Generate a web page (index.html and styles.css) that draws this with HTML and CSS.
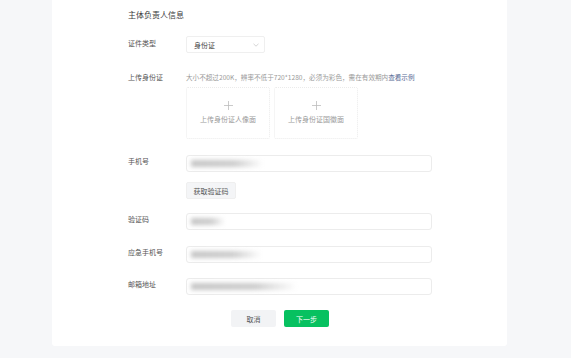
FILE: index.html
```html
<!DOCTYPE html>
<html lang="zh-CN">
<head>
    <meta charset="UTF-8">
    <meta name="viewport" content="width=device-width, initial-scale=1.0">
    <title>主体负责人信息</title>
    <link rel="stylesheet" href="styles.css">
</head>
<body>
    <div class="card">
        <h2 class="title">主体负责人信息</h2>

        <div class="row row-type">
            <label class="label">证件类型</label>
            <div class="field">
                <div class="select">
                    <span>身份证</span>
                    <svg class="chevron" width="6" height="4" viewBox="0 0 6 4"><path d="M0.5 0.8 L3 3.2 L5.5 0.8" fill="none" stroke="#c4c4c4" stroke-width="0.7"/></svg>
                </div>
            </div>
        </div>

        <div class="row row-upload">
            <label class="label">上传身份证</label>
            <div class="field">
                <p class="hint">大小不超过200K，辨率不低于720*1280，必须为彩色，需在有效期内<a href="#">查看示例</a></p>
                <div class="uploads">
                    <div class="upload">
                        <svg class="plus" width="9" height="9" viewBox="0 0 9 9"><path d="M4.5 0 V9 M0 4.5 H9" stroke="#bdbdbd" stroke-width="0.8"/></svg>
                        <span class="upload-text">上传身份证人像面</span>
                    </div>
                    <div class="upload">
                        <svg class="plus" width="9" height="9" viewBox="0 0 9 9"><path d="M4.5 0 V9 M0 4.5 H9" stroke="#bdbdbd" stroke-width="0.8"/></svg>
                        <span class="upload-text">上传身份证国徽面</span>
                    </div>
                </div>
            </div>
        </div>

        <div class="row row-phone">
            <label class="label">手机号</label>
            <div class="field">
                <div class="input"><span class="blur" style="width: 72px"></span></div>
                <button class="btn-code">获取验证码</button>
            </div>
        </div>

        <div class="row row-code">
            <label class="label">验证码</label>
            <div class="field">
                <div class="input"><span class="blur" style="width: 34px"></span></div>
            </div>
        </div>

        <div class="row row-backup">
            <label class="label">应急手机号</label>
            <div class="field">
                <div class="input"><span class="blur" style="width: 70px"></span></div>
            </div>
        </div>

        <div class="row row-mail">
            <label class="label">邮箱地址</label>
            <div class="field">
                <div class="input"><span class="blur" style="width: 106px"></span></div>
            </div>
        </div>

        <div class="actions">
            <button class="btn btn-cancel">取消</button>
            <button class="btn btn-next">下一步</button>
        </div>
    </div>
</body>
</html>
```

FILE: styles.css
```css
body {
    margin: 0;
    padding: 0;
    background: #f6f7f9;
    font-family: "Noto Sans CJK SC", "Noto Sans", sans-serif;
    color: #353535;
}
.card {
    margin-left: 52px;
    width: 455px;
    height: 346px;
    box-sizing: border-box;
    background: #fff;
    border-radius: 0 0 3px 3px;
    padding: 10px 0 0 76px;
}
.title {
    margin: 0;
    font-size: 8px;
    line-height: 10px;
    font-weight: normal;
    color: #3a3a3a;
}
.row {
    display: flex;
    align-items: flex-start;
}
.label {
    width: 58px;
    flex-shrink: 0;
    font-size: 7px;
    line-height: 10px;
    padding-top: 1px;
    color: #555;
}
.field {
    display: flex;
    flex-direction: column;
    align-items: flex-start;
}
.row-type {
    margin-top: 16px;
}
.row-type .label {
    padding-top: 2px;
}
.select {
    width: 79px;
    height: 17px;
    box-sizing: border-box;
    border: 1px solid #efefef;
    border-radius: 2px;
    display: flex;
    align-items: center;
    justify-content: space-between;
    padding: 0 5px 0 7px;
    font-size: 7px;
    color: #444;
}
.row-upload {
    margin-top: 19px;
}
.row-upload .label {
    padding-top: 0;
}
.hint {
    margin: 0;
    font-size: 6.6px;
    line-height: 10px;
    color: #9a9a9a;
    white-space: nowrap;
}
.hint a {
    color: #576b95;
    text-decoration: none;
}
.uploads {
    display: flex;
    gap: 4px;
    margin-top: 5px;
}
.upload {
    width: 84px;
    height: 52px;
    box-sizing: border-box;
    border: 1px dotted #ebebeb;
    border-radius: 2px;
    display: flex;
    flex-direction: column;
    align-items: center;
    justify-content: center;
    padding-bottom: 2px;
}
.plus {
    display: block;
}
.upload-text {
    margin-top: 4px;
    font-size: 7px;
    line-height: 10px;
    color: #9a9a9a;
}
.row-phone {
    margin-top: 16px;
}
.input {
    width: 246px;
    height: 17px;
    box-sizing: border-box;
    border: 1px solid #ececec;
    border-radius: 3px;
    display: flex;
    align-items: center;
    padding-left: 4px;
}
.blur {
    height: 7px;
    background: linear-gradient(90deg, #c6c6c6, #cdcdcd 60%, rgba(225, 225, 225, 0));
    filter: blur(2px);
}
.btn-code {
    margin-top: 10px;
    width: 50px;
    height: 17px;
    border: 1px solid #efefef;
    border-radius: 2px;
    background: #f4f5f7;
    font-family: inherit;
    font-size: 7px;
    color: #555;
    padding: 0;
}
.row-code {
    margin-top: 14px;
}
.row-backup {
    margin-top: 16px;
}
.row-mail {
    margin-top: 15px;
}
.actions {
    display: flex;
    gap: 8px;
    margin: 15px 0 0 103px;
}
.btn {
    width: 45px;
    height: 17px;
    border: none;
    border-radius: 2px;
    font-family: inherit;
    font-size: 7px;
    padding: 0;
}
.btn-cancel {
    background: #f2f3f5;
    color: #555;
}
.btn-next {
    background: #07c160;
    color: #fff;
}
```
